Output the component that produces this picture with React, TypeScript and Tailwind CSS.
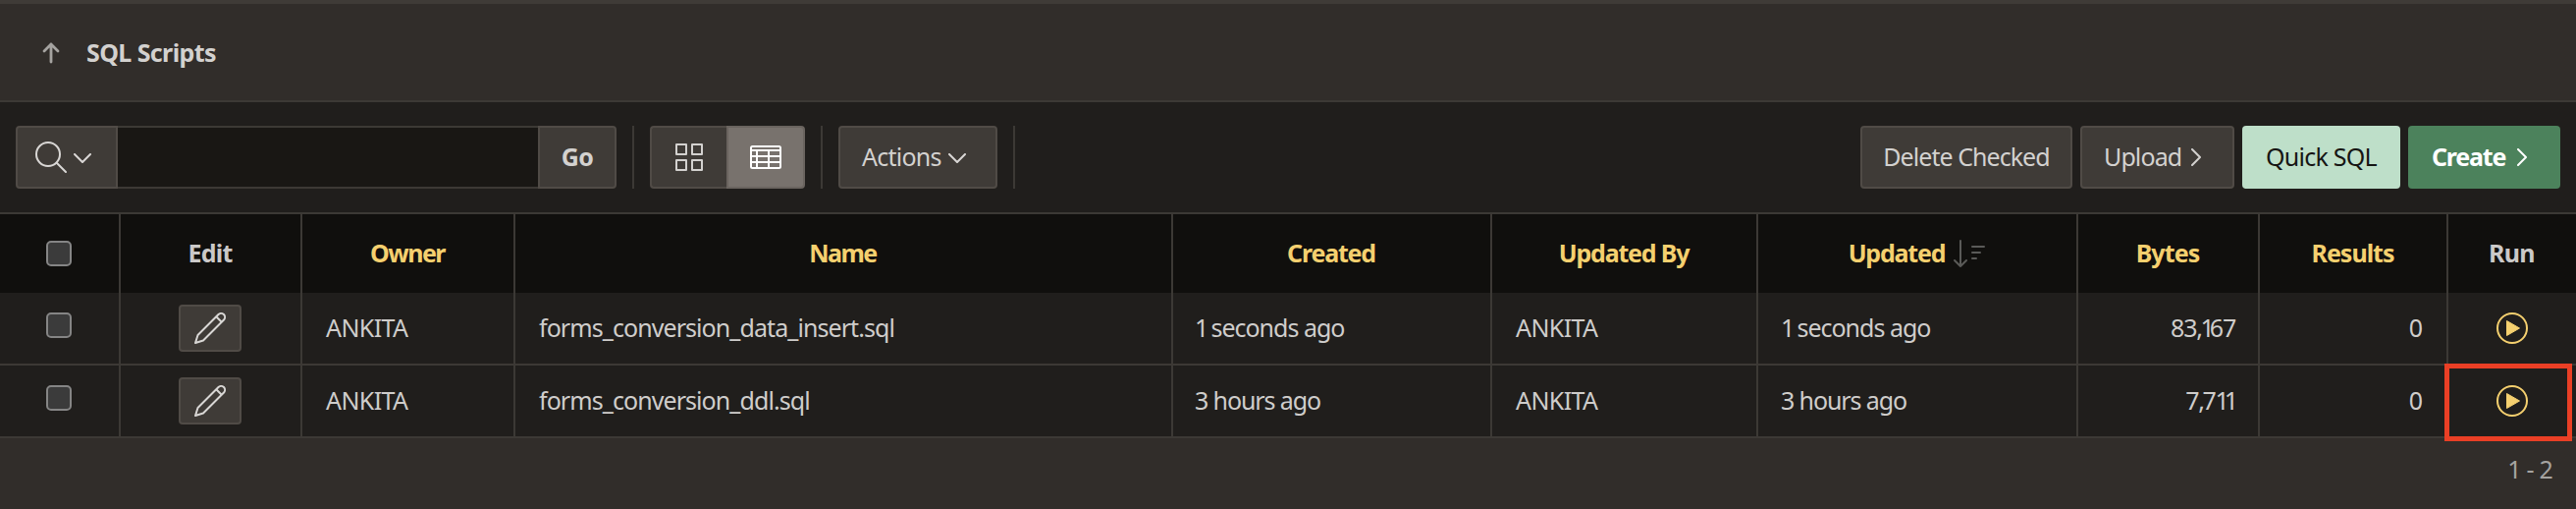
import type { ReactNode } from "react";

const LINE = "border-[#3c3935]";
const BTN = "flex h-16 items-center rounded-[4px] border-2 border-[#504b46] bg-[#3f3b37] text-[#d3d1cf]";

function Up() {
  return (
    <svg className="h-6 w-5" viewBox="0 0 20 24" fill="none" stroke="#a5a3a0" strokeWidth="2.8" strokeLinecap="round" strokeLinejoin="round">
      <path d="M10 22V4M3 11L10 4L17 11" />
    </svg>
  );
}

function Search() {
  return (
    <svg className="h-8 w-8" viewBox="0 0 32 32" fill="none" stroke="#d9d7d5" strokeWidth="2" strokeLinecap="round">
      <circle cx="13" cy="13" r="12" />
      <path d="M22 22L31 31" />
    </svg>
  );
}

function Down({ className }: { className: string }) {
  return (
    <svg className={className} viewBox="0 0 18 10" fill="none" stroke="#d9d7d5" strokeWidth="2" strokeLinecap="round" strokeLinejoin="round">
      <path d="M1 1L9 9L17 1" />
    </svg>
  );
}

function Right({ color }: { color: string }) {
  return (
    <svg className="h-[18px] w-[10px]" viewBox="0 0 10 18" fill="none" stroke={color} strokeWidth="2" strokeLinecap="round" strokeLinejoin="round">
      <path d="M1 1L9 9L1 17" />
    </svg>
  );
}

function Tiles() {
  return (
    <svg className="h-7 w-7" viewBox="0 0 28 28" fill="none" stroke="#d3d1cf" strokeWidth="2" strokeLinejoin="round">
      <rect x="1" y="1" width="10" height="10" />
      <rect x="17" y="1" width="10" height="10" />
      <rect x="1" y="17" width="10" height="10" />
      <rect x="17" y="17" width="10" height="10" />
    </svg>
  );
}

function Grid() {
  return (
    <svg className="h-6 w-8" viewBox="0 0 32 24" fill="none" stroke="#ffffff" strokeWidth="2">
      <rect x="1" y="1" width="30" height="22" rx="1.5" />
      <path d="M1 5H31M1 11H31M1 17H31M7 5V23M19 5V23" />
    </svg>
  );
}

function Pencil() {
  return (
    <svg className="h-8 w-8" viewBox="0 0 32 32" fill="none" stroke="#d9d7d5" strokeWidth="2" strokeLinejoin="round">
      <path d="M1 31L3.500 23L24.500 2C26 0.600 28.500 0.600 30 2C31.400 3.500 31.400 6 30 7.500L9 28.500Z" />
      <path d="M22.500 4.500L27.500 9.500" />
    </svg>
  );
}

function Play() {
  return (
    <svg className="h-8 w-8" viewBox="0 0 32 32">
      <circle cx="16" cy="16" r="15" fill="none" stroke="#f5d06f" strokeWidth="2" />
      <path d="M10.500 8.500L23.500 16L10.500 23.500Z" fill="#f5d06f" stroke="#f5d06f" strokeWidth="1" strokeLinejoin="round" />
    </svg>
  );
}

function SortDown() {
  return (
    <svg className="h-7 w-8" viewBox="0 0 32 28" fill="none" stroke="#5a5a58" strokeWidth="2" strokeLinecap="round" strokeLinejoin="round">
      <path d="M7 1V27M1 21L7 27L13 21M19 7H31M19 13H27M19 19H23" />
    </svg>
  );
}

function Box({ className = "" }: { className?: string }) {
  return <span className={`block h-[26px] w-[26px] rounded-[5px] border-2 border-[#858585] bg-[#3b3b3b] ${className}`} />;
}

function Separator() {
  return <div className="h-16 w-0.5 bg-[#3c3935]" />;
}

/* Tightens the wide side bearings of "1" and "," so figures set proportionally. */
function Figures({ text, one = "tracking-[-5px]" }: { text: string; one?: string }) {
  return (
    <span>
      {text.split(/([1,])/).map((part, i) =>
        part === "1" ? (
          <span key={i} className={one}>1</span>
        ) : part === "," ? (
          <span key={i} className="tracking-[-2.5px]">,</span>
        ) : (
          part
        ),
      )}
    </span>
  );
}

function Head({ children, plain = false, last = false, track = "tracking-[-1.2px]" }: { children: ReactNode; plain?: boolean; last?: boolean; track?: string }) {
  return (
    <div className={`flex items-center justify-center pr-px pb-0.5 font-bold ${track} ${LINE} ${last ? "" : "border-r-2"} ${plain ? "text-[#cbc9c8]" : "text-[#f5d06f]"}`}>
      {children}
    </div>
  );
}

function Cell({ children, className = "" }: { children: ReactNode; className?: string }) {
  return <div className={`flex items-center border-r-2 ${LINE} ${className}`}>{children}</div>;
}

const COLS = "grid grid-cols-[123px_185px_217px_670px_325px_271px_326px_185px_192px_130px]";

const rows = [
  { name: "forms_conversion_data_insert.sql", when: "1 seconds ago", whenCls: "tracking-[-1px]", bytes: "83,167", bytesCls: "pr-[23px] tracking-[-1.2px]", marked: false },
  { name: "forms_conversion_ddl.sql", when: "3 hours ago", whenCls: "tracking-[-1.1px]", bytes: "7,711", bytesCls: "pr-[25px] tracking-[-1.4px]", marked: true },
];

export default function App() {
  return (
    <div className="flex h-[518px] w-[2624px] flex-col overflow-hidden whitespace-nowrap bg-[#312d2a] font-['Noto_Sans',sans-serif] text-[25px] leading-8 text-[#cfcdcb]">
      <header className="flex h-[104px] items-center border-t-4 border-b-2 border-t-[#3f3b37] border-b-[#3c3935] pl-[42px]">
        <Up />
        <h1 className="ml-[26px] text-[25px] font-bold tracking-[-0.6px] text-[#d3d1cf]">SQL Scripts</h1>
      </header>

      <div className="flex h-28 items-center bg-[#201e1c] px-4">
        <div className="flex">
          <button className={`${BTN} w-[104px] rounded-r-none pl-[18px]`}>
            <Search />
            <Down className="mt-0.5 ml-[7px] h-[10px] w-[18px]" />
          </button>
          <div className="h-16 w-[428px] border-y-2 border-[#3c3935] bg-[#191714]" />
          <button className={`${BTN} w-20 justify-center rounded-l-none pb-0.5 font-bold tracking-[-0.6px]`}>Go</button>
        </div>
        <div className="ml-4"><Separator /></div>
        <div className="ml-4 flex">
          <button className={`${BTN} w-[78px] justify-center rounded-r-none border-r-0 pr-px`}><Tiles /></button>
          <button className="flex h-16 w-20 items-center justify-center rounded-r-[4px] border-2 border-[#6a645f] bg-[#78726d]"><Grid /></button>
        </div>
        <div className="ml-4"><Separator /></div>
        <button className={`${BTN} ml-4 w-[162px] pl-[22px] tracking-[-0.75px]`}>
          <span className="pb-0.5">Actions</span>
          <Down className="mt-0.5 ml-[7px] h-[10px] w-[18px]" />
        </button>
        <div className="ml-4"><Separator /></div>

        <div className="ml-auto flex gap-2">
          <button className={`${BTN} w-[216px] justify-center pb-0.5 tracking-[-0.95px]`}>Delete Checked</button>
          <button className={`${BTN} w-[157px] pl-[22px] tracking-[-0.9px]`}>
            <span className="pb-0.5">Upload</span>
            <span className="ml-[10px]"><Right color="#d3d1cf" /></span>
          </button>
          <button className="h-16 w-[161px] rounded-[4px] bg-[#bedfc9] pb-0.5 tracking-[-0.75px] text-[#161513]">Quick SQL</button>
          <button className="flex h-16 w-[155px] items-center rounded-[4px] bg-[#4c825c] pl-6 font-bold tracking-[-1.2px] text-white">
            <span className="pb-0.5">Create</span>
            <span className="ml-3"><Right color="#ffffff" /></span>
          </button>
        </div>
      </div>

      <div className={`h-[82px] border-t-2 bg-[#100f0d] ${LINE} ${COLS}`}>
        <Cell className="justify-center pr-px"><Box /></Cell>
        <Head plain track="tracking-[-0.8px]">Edit</Head>
        <Head track="tracking-[-1.5px]">Owner</Head>
        <Head track="tracking-[-1.5px]">Name</Head>
        <Head>Created</Head>
        <Head>Updated By</Head>
        <Head>Updated<span className="mt-0.5 ml-[9px]"><SortDown /></span></Head>
        <Head track="tracking-[-0.9px]">Bytes</Head>
        <Head track="tracking-[-1px]">Results</Head>
        <Head plain last track="tracking-[-0.7px]">Run</Head>
      </div>

      {rows.map((r) => (
        <div key={r.name} className={`h-[74px] border-b-2 bg-[#201e1c] ${LINE} ${COLS}`}>
          <Cell className="justify-center pr-px"><Box className="-mt-[6px]" /></Cell>
          <Cell className="justify-center pr-px">
            <button className="flex h-12 w-16 items-center justify-center rounded-[4px] border-2 border-[#504b46] bg-[#3f3b37]"><Pencil /></button>
          </Cell>
          <Cell className="pb-0.5 pl-6 tracking-[-0.6px]">ANKITA</Cell>
          <Cell className="pb-0.5 pl-6 tracking-[-0.93px]">{r.name}</Cell>
          <Cell className={`pb-0.5 pl-[22px] ${r.whenCls}`}><Figures text={r.when} one="tracking-[-3.4px]" /></Cell>
          <Cell className="pb-0.5 pl-6 tracking-[-0.6px]">ANKITA</Cell>
          <Cell className={`pb-0.5 pl-[23px] ${r.whenCls}`}><Figures text={r.when} one="tracking-[-3.4px]" /></Cell>
          <Cell className={`justify-end pb-0.5 ${r.bytesCls}`}><Figures text={r.bytes} /></Cell>
          <Cell className="justify-end pr-6 pb-0.5">0</Cell>
          <div className="relative flex items-center justify-center">
            <Play />
            {r.marked && <div className="absolute -top-0.5 -left-1 h-[79px] w-[130px] border-5 border-[#ea3f25]" />}
          </div>
        </div>
      ))}

      <footer className="flex flex-1 items-center justify-end pr-6 pb-[10px] tracking-[-0.8px] text-[#a5a3a0]">1 - 2</footer>
    </div>
  );
}
